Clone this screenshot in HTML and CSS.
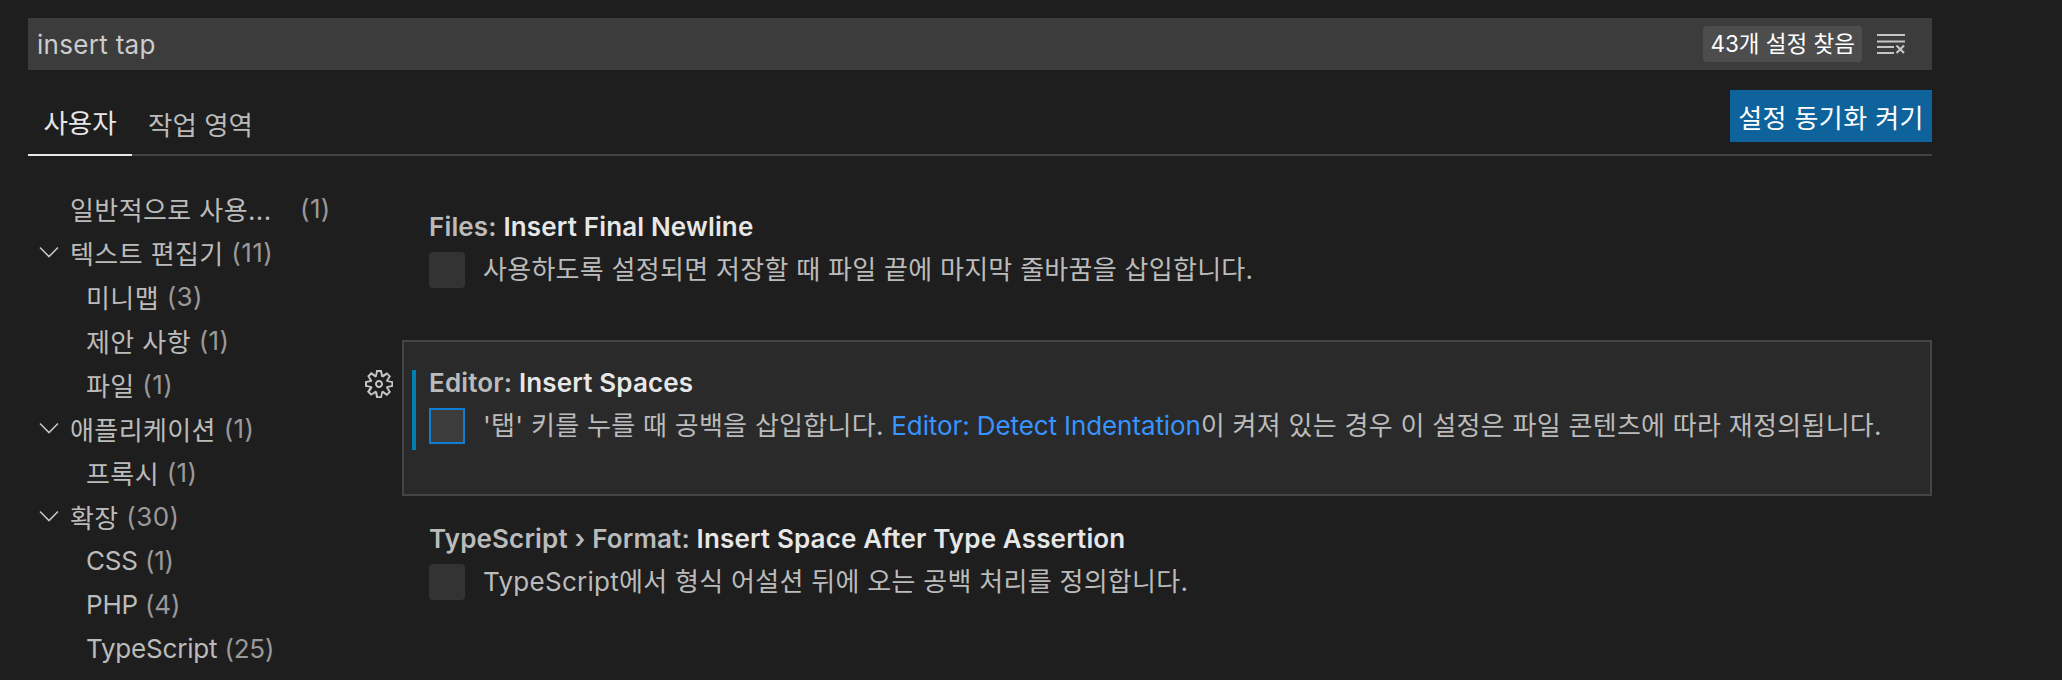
FILE: index.html
```html
<!DOCTYPE html>
<html>
<head>
    <title>Settings</title>
    <link rel="stylesheet" href="styles.css">
</head>
<body>
    <div class="container">
        <div class="search-bar">
            <span class="search-text">insert tap</span>
            <span class="search-count">43개 설정 찾음</span>
            <svg class="clear-icon" width="28" height="20" viewBox="0 0 28 20" fill="none" stroke="#c5c5c5" stroke-width="2">
                <path d="M0 1H28M0 7.500H28M0 13H17M0 19H17"/>
                <path d="M19.500 11.500L27 19M27 11.500L19.500 19" stroke-width="2.200"/>
            </svg>
        </div>

        <div class="tabs-row">
            <div class="tab active">사용자</div>
            <div class="tab">작업 영역</div>
            <button class="sync-button">설정 동기화 켜기</button>
        </div>

        <div class="main">
            <div class="sidebar">
                <div class="tree-row top"><span class="tree-label ellipsis">일반적으로 사용...</span><span class="count">(1)</span></div>
                <div class="tree-row top"><svg class="chevron" width="22" height="14" viewBox="0 0 22 14"><path d="M2 2.500L11 11.500L20 2.500"/></svg>텍스트 편집기 <span class="count">(11)</span></div>
                <div class="tree-row sub">미니맵 <span class="count">(3)</span></div>
                <div class="tree-row sub">제안 사항 <span class="count">(1)</span></div>
                <div class="tree-row sub">파일 <span class="count">(1)</span></div>
                <div class="tree-row top"><svg class="chevron" width="22" height="14" viewBox="0 0 22 14"><path d="M2 2.500L11 11.500L20 2.500"/></svg>애플리케이션 <span class="count">(1)</span></div>
                <div class="tree-row sub">프록시 <span class="count">(1)</span></div>
                <div class="tree-row top"><svg class="chevron" width="22" height="14" viewBox="0 0 22 14"><path d="M2 2.500L11 11.500L20 2.500"/></svg>확장 <span class="count">(30)</span></div>
                <div class="tree-row sub latin">CSS <span class="count">(1)</span></div>
                <div class="tree-row sub latin">PHP <span class="count">(4)</span></div>
                <div class="tree-row sub latin">TypeScript <span class="count">(25)</span></div>
            </div>

            <div class="settings">
                <div class="setting">
                    <div class="setting-title">Files: <b>Insert Final Newline</b></div>
                    <div class="setting-value">
                        <span class="checkbox"></span>
                        <span class="description">사용하도록 설정되면 저장할 때 파일 끝에 마지막 줄바꿈을 삽입합니다.</span>
                    </div>
                </div>
                <div class="setting focused">
                    <svg class="gear" width="32" height="32" viewBox="0 0 16 16" fill="#c5c5c5">
                        <path fill-rule="evenodd" clip-rule="evenodd" d="M9.100 4.400L8.600 2H7.400L6.900 4.400L6.200 4.700L4.200 3.400L3.300 4.200L4.600 6.200L4.400 6.900L2 7.400V8.600L4.400 9.100L4.700 9.900L3.400 11.900L4.200 12.700L6.200 11.400L7 11.700L7.500 14.100H8.700L9.200 11.700L10 11.400L12 12.700L12.800 11.900L11.500 9.900L11.800 9.100L14.200 8.600V7.400L11.800 6.900L11.500 6.200L12.800 4.200L12 3.400L10 4.700L9.100 4.400ZM9.400 1L9.900 3.400L12 2.100L14 4.100L12.600 6.200L15 6.600V9.400L12.600 9.900L14 12L12 14L9.900 12.600L9.400 15H6.600L6.100 12.600L4 13.900L2 11.900L3.400 9.800L1 9.400V6.600L3.400 6.100L2.100 4L4.100 2L6.200 3.400L6.600 1H9.400ZM10 8C10 9.100 9.100 10 8 10C6.900 10 6 9.100 6 8C6 6.900 6.900 6 8 6C9.100 6 10 6.900 10 8ZM8 9C8.600 9 9 8.600 9 8C9 7.400 8.600 7 8 7C7.400 7 7 7.400 7 8C7 8.600 7.400 9 8 9Z"/>
                    </svg>
                    <div class="focus-bar"></div>
                    <div class="setting-title">Editor: <b>Insert Spaces</b></div>
                    <div class="setting-value">
                        <span class="checkbox"></span>
                        <span class="description">'탭' 키를 누를 때 공백을 삽입합니다. <a class="link">Editor: Detect Indentation</a>이 켜져 있는 경우 이 설정은 파일 콘텐츠에 따라 재정의됩니다.</span>
                    </div>
                </div>
                <div class="setting">
                    <div class="setting-title">TypeScript › Format: <b>Insert Space After Type Assertion</b></div>
                    <div class="setting-value">
                        <span class="checkbox"></span>
                        <span class="description">TypeScript에서 형식 어설션 뒤에 오는 공백 처리를 정의합니다.</span>
                    </div>
                </div>
            </div>
        </div>
    </div>
</body>
</html>
```

FILE: styles.css
```css
html, body {
    height: 100%;
}
body {
    font-family: Inter, "Noto Sans CJK KR", sans-serif;
    background-color: #1e1e1e;
    color: #bbbbbb;
    margin: 0;
    overflow: hidden;
}
.container {
    width: 1904px;
    margin-left: 28px;
    padding-top: 18px;
}
.search-bar {
    display: flex;
    align-items: center;
    height: 52px;
    padding: 0 27px 0 9px;
    background-color: #3c3c3c;
    box-sizing: border-box;
}
.search-text {
    flex: 1;
    font-size: 26px;
    letter-spacing: 0.300px;
    color: #cccccc;
}
.search-count {
    padding: 0 7px;
    margin-right: 15px;
    border-radius: 4px;
    background-color: #4d4d4d;
    color: #ffffff;
    font-size: 22.500px;
    line-height: 36px;
}
.tabs-row {
    display: flex;
    align-items: flex-end;
    height: 84px;
    border-bottom: 2px solid #424242;
}
.tab {
    width: 104px;
    height: 64px;
    line-height: 66px;
    margin-bottom: -2px;
    font-size: 26.500px;
    text-align: center;
}
.tab + .tab {
    width: auto;
    padding-left: 16px;
}
.tab.active {
    color: #e7e7e7;
    border-bottom: 2px solid #e7e7e7;
}
.sync-button {
    align-self: flex-start;
    margin: 20px 0 0 auto;
    width: 202px;
    height: 52px;
    border: none;
    padding: 0;
    background-color: #0e639c;
    color: #ffffff;
    font-family: inherit;
    font-size: 26px;
    letter-spacing: 0.400px;
}
.main {
    display: flex;
    padding-top: 28px;
}
.sidebar {
    width: 374px;
    flex-shrink: 0;
    padding-top: 2px;
    font-size: 26px;
}
.tree-row {
    display: flex;
    align-items: center;
    white-space: pre;
    height: 44px;
    letter-spacing: 0.400px;
    color: #bbbbbb;
}
.tree-row.top {
    padding-left: 42px;
}
.tree-row.sub {
    padding-left: 58px;
}
.tree-row.latin {
    letter-spacing: -0.200px;
}
.tree-label.ellipsis {
    width: 230px;
}
.count {
    color: #999999;
}
.chevron {
    margin-left: -32px;
    margin-right: 10px;
    fill: none;
    stroke: #c5c5c5;
    stroke-width: 1.600;
}
.settings {
    flex: 1;
}
.setting {
    position: relative;
    height: 156px;
    padding: 25px 0 0 25px;
    box-sizing: border-box;
    border: 2px solid transparent;
    font-size: 26px;
}
.setting.focused {
    background-color: #2a2a2a;
    border-color: #454545;
}
.setting-title {
    font-weight: 600;
    color: #bbbbbb;
    line-height: 32px;
    letter-spacing: 0.150px;
    white-space: nowrap;
}
.setting-title b {
    font-weight: 600;
    color: #e7e7e7;
}
.setting-value {
    display: flex;
    gap: 18px;
    align-items: flex-start;
    margin-top: 9px;
    line-height: 36px;
    white-space: nowrap;
}
.description {
    letter-spacing: 0.280px;
}
.checkbox {
    width: 36px;
    height: 36px;
    flex-shrink: 0;
    background-color: #333333;
    border-radius: 4px;
    box-sizing: border-box;
}
.focused .checkbox {
    background-color: #3c3c3c;
    border: 2px solid #0e7fd0;
    border-radius: 0;
}
.link {
    color: #3794ff;
    letter-spacing: -0.100px;
}
.focus-bar {
    position: absolute;
    left: 8px;
    top: 28px;
    width: 4px;
    height: 80px;
    background-color: #007fb4;
}
.gear {
    position: absolute;
    left: -41px;
    top: 26px;
}
```
